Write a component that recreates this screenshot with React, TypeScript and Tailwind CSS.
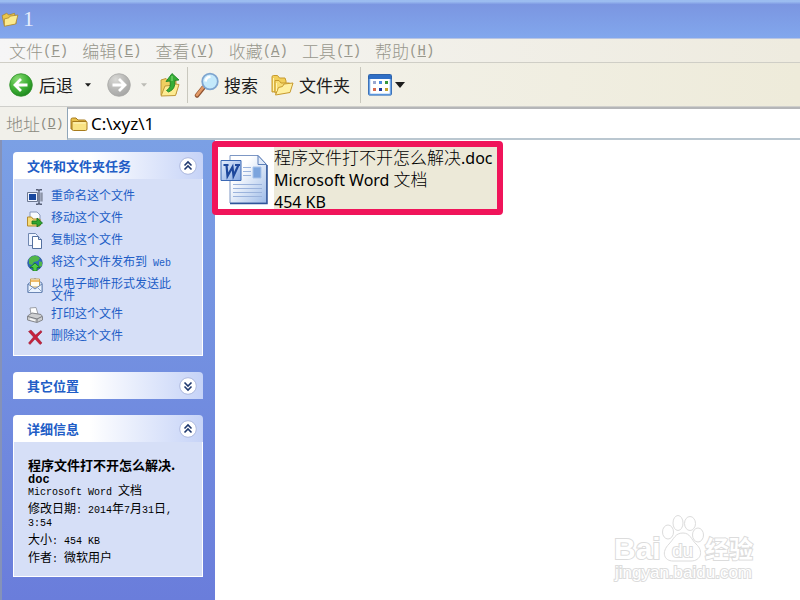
import { useState } from "react";
import type { ReactNode } from "react";

const menus = [
  ["文件", "F"],
  ["编辑", "E"],
  ["查看", "V"],
  ["收藏", "A"],
  ["工具", "T"],
  ["帮助", "H"],
];

function FolderIcon({ className }: { className: string }) {
  return (
    <svg viewBox="0 0 18 16" className={className} aria-hidden="true">
      <path d="M1 13V3.500Q1 2 2.500 2H6l2 2h6.500Q16 4 16 5.500V13z" fill="#e8c04a" stroke="#a77b1c" />
      <path d="M2 6.500Q2 5.500 3 5.500h13Q17 5.500 17 6.500V13q0 1.500-1.500 1.500H3.500Q2 14.500 2 13z" fill="#f9e384" stroke="#a77b1c" />
      <path d="M3.500 7h12" stroke="#fff6c4" />
    </svg>
  );
}

function OpenFolderIcon({ className }: { className: string }) {
  return (
    <svg viewBox="0 0 16 15" className={className} aria-hidden="true">
      <path d="M1 4l4-2 2 1.500 5-1.500 1.500 9L3 13z" fill="#e9c64d" stroke="#ab842c" strokeWidth=".7" />
      <path d="M3 7l4-1 1-1.500 7-1-2 8L3 13.500z" fill="#fbea8f" stroke="#ab842c" strokeWidth=".7" />
    </svg>
  );
}

function FoldersIcon() {
  return (
    <svg viewBox="0 0 24 24" className="h-6 w-6" aria-hidden="true">
      <path d="M2 19V4q0-1.500 1.500-1.500h4L9.500 5H15l1 3v10z" fill="#f2cf59" stroke="#c79a2e" />
      <path d="M5 20V7.500h4l2 2.500h8.500V19z" fill="#f7dc72" stroke="#c79a2e" />
      <path d="M5.500 22l3-7.500 4-1 1.500-2.500 9-1-3 9.500z" fill="#fff0a0" stroke="#c79a2e" strokeLinejoin="round" />
      <path d="M3.500 5v13M6.500 10v8" stroke="#fff3b4" />
    </svg>
  );
}

function RoundArrow({ forward = false }: { forward?: boolean }) {
  return (
    <svg viewBox="0 0 24 24" className="h-6 w-6" aria-hidden="true">
      <defs>
        <radialGradient id={forward ? "fwd" : "back"} cx=".35" cy=".25" r=".9">
          <stop offset="0" stopColor={forward ? "#d9d9d6" : "#8adb74"} />
          <stop offset=".5" stopColor={forward ? "#b8b8b6" : "#3fb136"} />
          <stop offset="1" stopColor={forward ? "#a0a09f" : "#147a17"} />
        </radialGradient>
      </defs>
      <circle cx="12" cy="12" r="11.300" fill={forward ? "url(#fwd)" : "url(#back)"} stroke={forward ? "#a8a8a6" : "#2f8f2a"} strokeWidth=".8" />
      <path
        d={forward ? "M5.500 12h12M12 6l6 6-6 6" : "M18.500 12h-12M12 6l-6 6 6 6"}
        fill="none"
        stroke="#fff"
        strokeWidth="2.800"
      />
    </svg>
  );
}

function UpFolderIcon() {
  return (
    <svg viewBox="0 0 22 26" className="h-[26px] w-[22px]" aria-hidden="true">
      <path d="M2 23V8l5-1.500 2 2 8 .5v13z" fill="#efcf60" stroke="#c0983a" />
      <path d="M2 24l4-10 5-.5 2-2 7 1-3.500 11z" fill="#fdeb91" stroke="#c0983a" />
      <path d="M7.500 18.500q5-3 3.500-9.500L7 9.500l6-8 7 6.500-4.200.5q1 9-6.300 11.500z" fill="#35ad35" stroke="#147a20" strokeWidth=".8" />
      <path d="M13 4v5" stroke="#8be07e" />
    </svg>
  );
}

function SearchIcon() {
  return (
    <svg viewBox="0 0 25 26" className="h-[26px] w-[25px]" aria-hidden="true">
      <path d="M9.500 15.500l-6.500 8" stroke="#8f5330" strokeWidth="4.400" strokeLinecap="round" />
      <path d="M9 15.500l-6 7.500" stroke="#e39a66" strokeWidth="2.800" strokeLinecap="round" />
      <circle cx="16" cy="9.500" r="7.800" fill="#c4e9fb" stroke="#7fa5cf" strokeWidth="1.800" />
      <path d="M11.500 9.500q.5-4.500 5-4.800" stroke="#fff" strokeWidth="2.500" fill="none" />
    </svg>
  );
}

function ViewsIcon() {
  return (
    <svg viewBox="0 0 24 22" className="h-[22px] w-6" aria-hidden="true">
      <rect x=".5" y=".5" width="23" height="20.500" rx="1" fill="#fff" stroke="#2d62a8" />
      <path d="M1 1h22v4H1z" fill="#2f6fc6" />
      <path d="M1.500 5v15.500M22.500 5v15.500" stroke="#6fa5e6" strokeWidth="1.500" />
      <path d="M1 20.500h22" stroke="#5a96dc" strokeWidth="1.500" />
      <path d="M5 7h3v3H5z" fill="#9aa7cf" />
      <path d="M11 7h3v3h-3z" fill="#4b8be0" />
      <path d="M17 7h3v3h-3z" fill="#36963c" />
      <path d="M5 14h3v3H5z" fill="#d9694c" />
      <path d="M11 14h3v3h-3z" fill="#203a9c" />
      <path d="M17 14h3v3h-3z" fill="#c6a12c" />
    </svg>
  );
}

function Caret({ className }: { className: string }) {
  return (
    <svg viewBox="0 0 10 6" className={className} aria-hidden="true">
      <path d="M0 0h10L5 6z" fill="currentColor" />
    </svg>
  );
}

function WordDocIcon() {
  return (
    <svg viewBox="0 0 48 52" className="h-[52px] w-12 shrink-0" aria-hidden="true">
      <defs>
        <linearGradient id="page" x1="0" y1="0" x2="1" y2="1">
          <stop offset=".3" stopColor="#fff" />
          <stop offset="1" stopColor="#9dbbe8" />
        </linearGradient>
        <linearGradient id="badge" x1="0" y1="0" x2="1" y2="1">
          <stop offset="0" stopColor="#e3edfc" />
          <stop offset="1" stopColor="#86a8e2" />
        </linearGradient>
      </defs>
      <path d="M10 2.500h28l8.500 9V50H10z" fill="url(#page)" stroke="#7d97c4" />
      <path d="M10 50.500h37V12" fill="none" stroke="#2f559b" strokeWidth="1.500" />
      <path d="M38 2.500V11.500h8.500z" fill="#dfe9f8" stroke="#5c7fb8" />
      <path d="M23 14.500h8M23 18.500h8M23 22.500h8M13 31.500h29M13 35.500h29M13 39.500h29M13 43.500h29" stroke="#9bb3dc" />
      <path d="M33 14h8v11h-8z" fill="#7ba4dd" stroke="#a8c3ea" />
      <path d="M1 7.500h20v20H1z" fill="url(#badge)" stroke="#3b68b4" />
      <path d="M3.500 12h5M6.500 12l1 11 5-9 1 9 5-11M15 12h5" fill="none" stroke="#1d479b" strokeWidth="2.200" />
    </svg>
  );
}

const taskIcons: Record<string, ReactNode> = {
  rename: (
    <>
      <path d="M.5 3.500h10v9H.5z" fill="#eef3ff" stroke="#6d7890" />
      <path d="M2 5h7v6H2z" fill="#17479e" />
      <path d="M9 .8h2l1 1 1-1h2M12 2v12M9 15.200h2l1-1 1 1h2" fill="none" stroke="#555e76" strokeWidth="1.400" />
      <path d="M14.500 3.500v9" stroke="#8d95a8" strokeWidth="2.500" />
    </>
  ),
  move: (
    <>
      <path d="M3 1h7l3 3v6H3z" fill="#f8fbff" stroke="#8898bb" />
      <path d="M.5 15V6h4l1.500 2h7v7z" fill="#f5dc78" stroke="#b58b2d" />
      <path d="M5 10h5V7l5.500 5L10 16v-3H5z" fill="#32a52f" stroke="#12701b" strokeWidth=".8" />
    </>
  ),
  copy: (
    <>
      <path d="M1.500.5h7l2 2v10h-9z" fill="#eef4ff" stroke="#7087b0" />
      <path d="M5.500 3.500h6l3 3v9h-9z" fill="#fff" stroke="#54709f" />
      <path d="M11.500 3.500v3h3" fill="#cddcf3" stroke="#54709f" />
    </>
  ),
  web: (
    <>
      <circle cx="8" cy="8" r="7.300" fill="#2d68bd" stroke="#27518c" strokeWidth=".7" />
      <path d="M2 4q3-4 8-3l3 2-2 3-4 1-2 3-3-1zM12 6l3 1v4l-3 1z" fill="#51b64a" />
      <path d="M8 8l5 4.500h-3V16H6v-3.500H3z" fill="#4fcb45" stroke="#14741c" strokeWidth=".8" />
    </>
  ),
  mail: (
    <>
      <path d="M1 7l7-5.500L15 6v9L1 15.500z" fill="#cfdff5" stroke="#6b86b4" />
      <path d="M3.500 2h9v8h-9z" fill="#fffdf0" stroke="#c9a255" />
      <path d="M4 3h8v2H4z" fill="#f2bd69" />
      <path d="M1 7l7 5 7-5v8.500H1z" fill="#eaf3ff" stroke="#6b86b4" />
      <path d="M1 15l5-5M15 15l-5-5" stroke="#8ca5cc" />
    </>
  ),
  print: (
    <>
      <path d="M4 7L3 1l6-.5L11 7z" fill="#fff" stroke="#9b9ea6" />
      <path d="M.5 9L5 6l9 1.500 1.500 2V13L10 15.500.5 13z" fill="#cdced0" stroke="#85878d" />
      <path d="M1 9.500l9 2.500 5-2.500M10 12v3" fill="none" stroke="#77797f" />
      <path d="M3 12l5 1.500" stroke="#f7f7f7" strokeWidth="1.500" />
    </>
  ),
  remove: (
    <path d="M1.500 2.500L4 1l4.500 5L14 1.500l1 1.500-5 5 5 6-2 1.500-5-5.500L3 15.500 1.500 14l5-6z" fill="#c7213b" stroke="#8f1830" strokeWidth=".5" />
  ),
};

const tasks = [
  { icon: "rename", label: "重命名这个文件" },
  { icon: "move", label: "移动这个文件" },
  { icon: "copy", label: "复制这个文件" },
  { icon: "web", label: "将这个文件发布到", latin: "Web" },
  { icon: "mail", label: "以电子邮件形式发送此文件" },
  { icon: "print", label: "打印这个文件" },
  { icon: "remove", label: "删除这个文件" },
];

// Half-width characters of the Song style face are half an em wide
function Latin({ children }: { children: ReactNode }) {
  return <span className="font-['Liberation_Mono',monospace] text-[10px] leading-[8px]">{children}</span>;
}

function Panel({ title, initial, children }: { title: string; initial: boolean; children: ReactNode }) {
  const [open, setOpen] = useState(initial);
  return (
    <section>
      <button
        type="button"
        aria-expanded={open}
        onClick={() => setOpen(!open)}
        className="flex h-[27px] w-full items-center justify-between rounded-t bg-linear-to-r from-white from-40% to-[#c6d3f7] pr-1.5 pl-3.5 text-[13px] font-bold text-[#215dc6]"
      >
        {title}
        <svg viewBox="0 0 18 18" className="h-[18px] w-[18px]" aria-hidden="true">
          <circle cx="9" cy="9" r="8.300" fill="#fff" stroke="#adb9de" />
          <path
            d={open ? "M5.500 8.500L9 5l3.500 3.500M5.500 12.500L9 9l3.500 3.500" : "M5.500 5.500L9 9l3.500-3.500M5.500 9.500L9 13l3.500-3.500"}
            fill="none"
            stroke="#20396f"
            strokeWidth="1.600"
          />
        </svg>
      </button>
      {open && <div className="border border-t-0 border-white bg-[#d6dff7]">{children}</div>}
    </section>
  );
}

function Watermark() {
  return (
    <svg
      viewBox="0 0 150 76"
      className="pointer-events-none absolute right-[38px] bottom-4 h-[76px] w-[150px] overflow-visible"
      fill="#fff"
      stroke="#dcdcdc"
      aria-label="Baidu 经验"
    >
      <g strokeWidth="1">
        <ellipse cx="56" cy="23" rx="5.500" ry="7" />
        <ellipse cx="66" cy="14" rx="5" ry="7.500" />
        <ellipse cx="78" cy="14.500" rx="5.500" ry="7" />
        <ellipse cx="86" cy="26" rx="5.500" ry="7" />
        <path d="M71 24c7 0 8 6 13 11 8 7 5 17-5 17H61c-9 0-12-9-4-17 5-5 6-11 14-11z" />
      </g>
      <g paintOrder="stroke" strokeWidth="2" className="font-['Liberation_Sans','Noto_Sans_CJK_SC',sans-serif]">
        <text x="2" y="50" fontSize="30" fontWeight="700">Bai</text>
        <text x="60" y="48" fontSize="19">du</text>
        <text x="93" y="49" fontSize="24" fontWeight="700">经验</text>
        <text x="3" y="69" fontSize="17">jingyan.baidu.com</text>
      </g>
    </svg>
  );
}

export default function App() {
  return (
    <div className="relative flex min-h-screen flex-col bg-white font-['Noto_Sans_CJK_SC',sans-serif] text-black">
      <header className="flex h-[39px] items-center gap-1 border-b border-[#b9c5e2] bg-linear-to-b from-[#9bbcf0] from-4% via-[#7b96e1] via-12% to-[#82a7ed] pl-px">
        <OpenFolderIcon className="h-[17px] w-[18px]" />
        <h1 className="font-['Liberation_Serif',serif] text-[22px] leading-6 text-[#e6edfc]">1</h1>
      </header>

      <nav className="flex h-6 items-center gap-3.5 border-b border-[#cfcec6] bg-linear-to-r from-[#f6f6f6] to-[#eeebdf] pl-[9px]">
        {menus.map(([name, key]) => (
          <button key={key} type="button" className="flex items-center text-[17px] leading-5 font-light whitespace-nowrap text-[#98978c]">
            {name}
            <span className="font-['Liberation_Mono',monospace] text-[14px]">
              (<u>{key}</u>)
            </span>
          </button>
        ))}
      </nav>

      <div className="flex h-11 items-center border-b border-[#cfcfcb] bg-linear-to-r from-[#f5f5f2] to-[#eeebda] pl-[9px] text-[17px] leading-6 whitespace-nowrap text-[#1c1c1c]">
        <button type="button" className="flex items-center gap-1.5">
          <RoundArrow />
          后退
        </button>
        <button type="button" aria-label="后退历史" className="ml-3">
          <Caret className="h-1 w-1.5" />
        </button>
        <button type="button" aria-label="前进" className="ml-4">
          <RoundArrow forward />
        </button>
        <button type="button" aria-label="前进历史" className="ml-2.5 text-[#bcbcb6]">
          <Caret className="h-1 w-1.5" />
        </button>
        <button type="button" aria-label="向上" className="ml-3">
          <UpFolderIcon />
        </button>
        <div className="mx-1.5 h-9 w-px bg-[#c9c8be]" />
        <button type="button" className="flex items-center gap-[5px]">
          <SearchIcon />
          搜索
        </button>
        <button type="button" className="ml-3 flex items-center gap-[5px]">
          <FoldersIcon />
          文件夹
        </button>
        <div className="mr-[7px] ml-2.5 h-9 w-px bg-[#c9c8be]" />
        <button type="button" aria-label="查看" className="flex items-center gap-[3px]">
          <ViewsIcon />
          <Caret className="h-1.5 w-2.5" />
        </button>
      </div>

      <div className="flex h-[33px] bg-[#f1f0ea]">
        <label htmlFor="address" className="flex w-[67px] shrink-0 items-center pl-1.5 text-[17px] leading-5 font-light whitespace-nowrap text-[#8b8a80]">
          地址
          <span className="font-['Liberation_Mono',monospace] text-[13px]">
            (<u>D</u>)
          </span>
        </label>
        <div className="flex flex-1 items-center gap-[3px] border-t-2 border-b-2 border-l border-t-[#b5b6b8] border-b-[#bac7d0] border-l-[#8fa5b8] bg-white pl-0.5">
          <FolderIcon className="h-4 w-[18px]" />
          <input
            id="address"
            defaultValue="C:\xyz\1"
            className="min-w-0 flex-1 font-['Noto_Sans',sans-serif] text-[17px] leading-6 outline-none"
          />
        </div>
      </div>

      <div className="flex flex-1">
        <aside className="flex w-[215px] shrink-0 flex-col gap-4 border-l-2 border-[#8592b8] bg-linear-to-b from-[#7ba0e5] to-[#6a7ddb] pt-3 pr-3 pb-6 pl-[11px]">
          <Panel title="文件和文件夹任务" initial>
            <ul className="flex flex-col gap-1.5 pt-2.5 pr-6 pb-2.5 pl-[13px]">
              {tasks.map((task) => (
                <li key={task.icon}>
                  <a href="#" className="flex gap-2 text-[12px] leading-3 text-[#215dc6]">
                    <svg viewBox="0 0 16 16" className="h-4 w-4 shrink-0" aria-hidden="true">
                      {taskIcons[task.icon]}
                    </svg>
                    <span>
                      {task.label}
                      {task.latin && <Latin> {task.latin}</Latin>}
                    </span>
                  </a>
                </li>
              ))}
            </ul>
          </Panel>

          <Panel title="其它位置" initial={false}>
            <p className="p-3 text-[12px]">我的电脑</p>
          </Panel>

          <Panel title="详细信息" initial>
            <div className="flex flex-col gap-[5px] pt-4 pr-2 pb-3 pl-3.5 text-[12px] leading-3">
              <div>
                <h2 className="text-[13px] leading-[13px] font-bold">
                  程序文件打不开怎么解决.
                  <br />
                  <span className="font-['Liberation_Mono',monospace] text-[12px] leading-[8px]">doc</span>
                </h2>
                <p>
                  <Latin>Microsoft Word </Latin>文档
                </p>
              </div>
              <p>
                修改日期<Latin>: 2014</Latin>年<Latin>7</Latin>月<Latin>31</Latin>日<Latin>,</Latin>
                <br />
                <Latin>3:54</Latin>
              </p>
              <p>
                大小<Latin>: 454 KB</Latin>
              </p>
              <p>
                作者<Latin>: </Latin>微软用户
              </p>
            </div>
          </Panel>
        </aside>

        <main className="min-w-0 flex-1 pt-px">
          <button
            type="button"
            className="-ml-[3px] flex h-[74px] items-start overflow-hidden rounded border-6 border-[#f0145a] bg-white pl-0.5 text-left"
          >
            <span className="pt-1.5 pr-1.5">
              <WordDocIcon />
            </span>
            <span className="block h-[66px] bg-[#ece9d8] pr-1 font-['Noto_Sans','Noto_Sans_CJK_SC',sans-serif] text-[16px] leading-[22px] whitespace-nowrap">
              <span className="text-[17px] leading-4 font-light">程序文件打不开怎么解决</span>.doc
              <br />
              Microsoft Word <span className="text-[17px] leading-4 font-light">文档</span>
              <br />
              454 KB
            </span>
          </button>
        </main>
      </div>

      <Watermark />
    </div>
  );
}
